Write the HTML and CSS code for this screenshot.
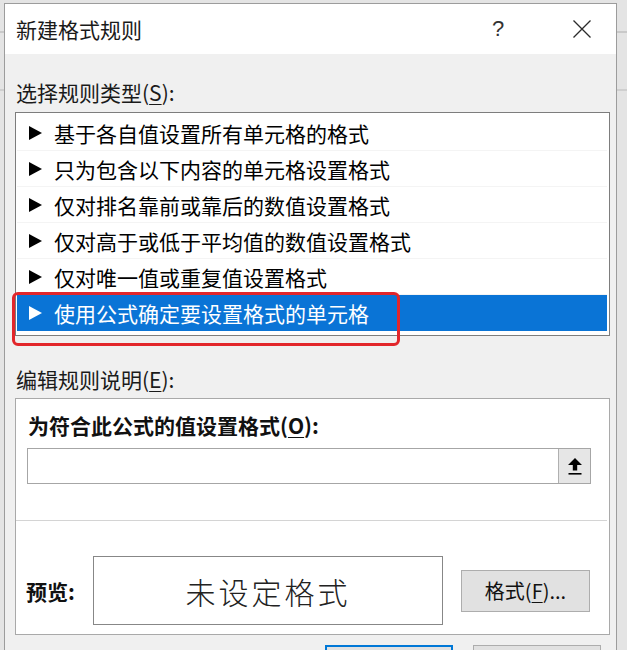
FILE: index.html
```html
<!DOCTYPE html>
<html lang="zh-CN">
<head>
<meta charset="utf-8">
<title>新建格式规则</title>
<link rel="stylesheet" href="styles.css">
</head>
<body>
<div class="window">
  <div class="titlebar">
    <span class="title">新建格式规则</span>
    <span class="help">?</span>
    <span class="close">
      <svg width="18" height="18" viewBox="0 0 18 18"><path d="M0.5 0.5 L17.5 17.5 M17.5 0.5 L0.5 17.5" stroke="#2b2b2b" stroke-width="1.3" fill="none"/></svg>
    </span>
  </div>
  <div class="content">
    <div class="label first">选择规则类型(<u>S</u>):</div>
    <div class="listwrap">
      <div class="list">
        <div class="row"><svg class="tri" width="13" height="14" viewBox="0 0 13 14"><polygon points="0,0 13,7 0,14"/></svg><span>基于各自值设置所有单元格的格式</span></div>
        <div class="row"><svg class="tri" width="13" height="14" viewBox="0 0 13 14"><polygon points="0,0 13,7 0,14"/></svg><span>只为包含以下内容的单元格设置格式</span></div>
        <div class="row"><svg class="tri" width="13" height="14" viewBox="0 0 13 14"><polygon points="0,0 13,7 0,14"/></svg><span>仅对排名靠前或靠后的数值设置格式</span></div>
        <div class="row"><svg class="tri" width="13" height="14" viewBox="0 0 13 14"><polygon points="0,0 13,7 0,14"/></svg><span>仅对高于或低于平均值的数值设置格式</span></div>
        <div class="row"><svg class="tri" width="13" height="14" viewBox="0 0 13 14"><polygon points="0,0 13,7 0,14"/></svg><span>仅对唯一值或重复值设置格式</span></div>
        <div class="row selected"><svg class="tri" width="13" height="14" viewBox="0 0 13 14"><polygon points="0,0 13,7 0,14"/></svg><span>使用公式确定要设置格式的单元格</span></div>
      </div>
      <div class="highlight"></div>
    </div>
    <div class="label second">编辑规则说明(<u>E</u>):</div>
    <div class="panel">
      <div class="panel-label">为符合此公式的值设置格式(<u>O</u>):</div>
      <div class="input">
        <div class="input-field"></div>
        <div class="input-btn">
          <svg width="14" height="17" viewBox="0 0 14 17"><polygon points="7,0 14,7 9.2,7 9.2,12.5 4.8,12.5 4.8,7 0,7" fill="#000"/><rect x="0.5" y="15" width="13" height="1.6" fill="#000"/></svg>
        </div>
      </div>
      <div class="sep"></div>
      <div class="preview-row">
        <div class="preview-label">预览:</div>
        <div class="preview-box">未设定格式</div>
        <div class="btn fmt">格式(<u>F</u>)...</div>
      </div>
    </div>
    <div class="buttons">
      <div class="btn ok"></div>
      <div class="btn cancel"></div>
    </div>
  </div>
</div>
</body>
</html>
```

FILE: styles.css
```css
html, body {
  margin: 0;
  padding: 0;
}
body {
  width: 627px;
  height: 650px;
  overflow: hidden;
  background:
    linear-gradient(to bottom, transparent 31px, #c9c9c9 31px, #c9c9c9 33px, transparent 33px, transparent 89px, #cfcfcf 89px, #cfcfcf 91px, transparent 91px),
    #e4e4e4;
  font-family: "Noto Sans CJK SC", "Microsoft YaHei", sans-serif;
  color: #111;
}
.window {
  margin: 3px 0 0 4px;
  width: 611px;
  height: 646px;
  border: 1px solid #9c9c9c;
  border-bottom: none;
  background: #f0f0f0;
  overflow: hidden;
}
.titlebar {
  height: 50px;
  background: #fff;
  display: flex;
  align-items: center;
  padding: 0 11px 0 11px;
}
.title {
  flex: 1;
  font-size: 21px;
  line-height: 30px;
  color: #1a1a1a;
}
.help {
  width: 40px;
  text-align: center;
  font-size: 22px;
  font-weight: 300;
  color: #333;
  margin-right: 41px;
  font-family: "Liberation Sans", sans-serif;
}
.close {
  width: 46px;
  height: 30px;
  display: flex;
  align-items: center;
  justify-content: center;
}
.content {
  padding: 0 6px 0 10px;
}
.label {
  font-size: 21px;
  line-height: 30px;
  padding-left: 1px;
  color: #1a1a1a;
}
.label.first {
  padding-top: 23px;
  padding-bottom: 5px;
}
.label.second {
  padding-top: 28px;
  padding-bottom: 4px;
}
u {
  text-decoration-thickness: 1px;
  text-underline-offset: 3px;
}
.listwrap {
  position: relative;
}
.list {
  box-sizing: border-box;
  height: 224px;
  border: 1px solid #7d7d7d;
  background: #fff;
  padding: 2px 2px 0 1px;
}
.row {
  height: 36px;
  display: flex;
  align-items: center;
  padding-left: 12px;
  font-size: 21px;
  color: #000;
  box-sizing: border-box;
  border-bottom: 1px solid #f4f4f4;
}
.row .tri {
  fill: #000;
  margin-right: 12px;
  flex: none;
}
.row.selected {
  background: #0a74d6;
  color: #fff;
  border-bottom: none;
}
.row.selected .tri {
  fill: #fff;
}
.highlight {
  position: absolute;
  left: -3px;
  top: 180px;
  width: 388px;
  height: 54px;
  box-sizing: border-box;
  border: 3px solid #e2262b;
  border-radius: 6px;
}
.panel {
  box-sizing: border-box;
  height: 237px;
  border: 1px solid #a9a9a9;
  background: #fff;
}
.panel-label {
  padding: 11px 0 0 12px;
  font-size: 21px;
  line-height: 30px;
  font-weight: 700;
  color: #111;
}
.input {
  margin: 8px 0 0 11px;
  width: 564px;
  height: 36px;
  box-sizing: border-box;
  border: 1px solid #a6a6a6;
  display: flex;
}
.input-field {
  flex: 1;
}
.input-btn {
  width: 31px;
  background: #e6e6e6;
  border-left: 1px solid #b0b0b0;
  display: flex;
  align-items: center;
  justify-content: center;
}
.sep {
  margin: 36px 2px 0 0;
  height: 1px;
  background: #d4d4d4;
}
.preview-row {
  margin-top: 35px;
  display: flex;
  align-items: center;
  padding-left: 10px;
}
.preview-label {
  width: 67px;
  font-size: 21px;
  font-weight: 700;
  color: #111;
}
.preview-box {
  width: 350px;
  height: 69px;
  box-sizing: border-box;
  border: 1px solid #878787;
  display: flex;
  align-items: center;
  justify-content: center;
  font-size: 30px;
  font-weight: 300;
  letter-spacing: 3px;
  color: #222;
}
.btn {
  box-sizing: border-box;
  background: #e1e1e1;
  border: 1px solid #adadad;
  display: flex;
  align-items: center;
  justify-content: center;
  font-size: 20px;
  color: #111;
}
.btn.fmt {
  margin-left: 18px;
  width: 129px;
  height: 42px;
}
.buttons {
  margin-top: 10px;
  display: flex;
  justify-content: flex-end;
  gap: 20px;
  padding-right: 9px;
}
.btn.ok {
  width: 128px;
  height: 42px;
  border: 2px solid #0078d7;
}
.btn.cancel {
  width: 128px;
  height: 42px;
}
```
